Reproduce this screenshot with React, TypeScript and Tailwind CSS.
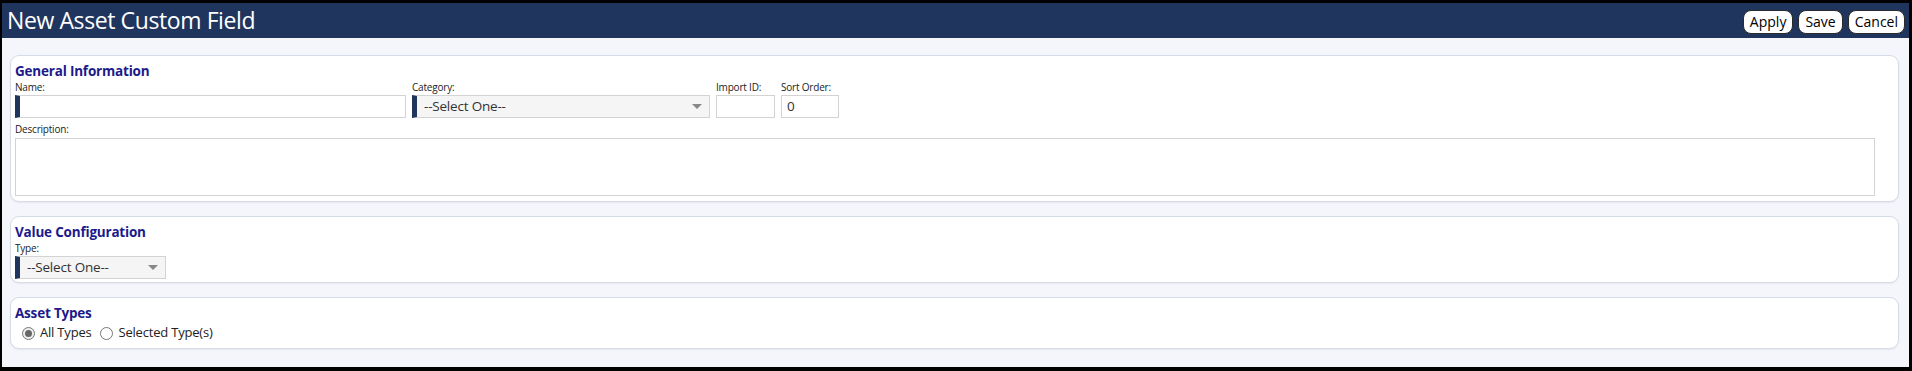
const font = { fontFamily: '"Open Sans", "Noto Sans", sans-serif' }

function Label({ children }: { children: React.ReactNode }) {
  return <div className="text-[10px] leading-[13px] text-[#222] tracking-[-0.2px]">{children}</div>
}

function SelectBox({ width }: { width: string }) {
  return (
    <div className={`flex items-center h-[23px] ${width} border border-[#d3d3d3] bg-[#f5f5f5] border-l-[5px] border-l-[#1f355e]`}>
      <span className="pl-[7px] text-[13.5px] text-[#333] flex-1 tracking-[-0.2px]">--Select One--</span>
      <svg width="10" height="6" viewBox="0 0 10 6" className="mr-[7px]">
        <path d="M0 0 L10 0 L5 5 Z" fill="#888" />
      </svg>
    </div>
  )
}

function Card({ title, children }: { title: string; children: React.ReactNode }) {
  return (
    <div className="bg-white border border-[#d6dbe8] rounded-[9px] px-[4px] pt-[6px] shadow-[0_1px_2px_rgba(0,0,0,0.06)]">
      <h2 className="text-[13.5px] font-bold leading-[18px] text-[#1c1a8a] tracking-[-0.2px]">{title}</h2>
      {children}
    </div>
  )
}

export default function App() {
  return (
    <div
      style={font}
      className="w-[1912px] h-[371px] bg-[#f4f6fc] border-black border-t-[3px] border-l-2 border-r-[3px] border-b-4 flex flex-col"
    >
      {/* header */}
      <div className="h-[35px] bg-[#1f355e] flex items-center justify-between pl-[5px] pr-[4px]">
        <h1 className="text-[23px] text-white leading-none tracking-[-0.4px]">New Asset Custom Field</h1>
        <div className="flex gap-[5px] pt-[2px]">
          {['Apply', 'Save', 'Cancel'].map(b => (
            <button
              key={b}
              className="h-[24px] px-[6px] rounded-[8px] bg-white border border-[#2a2a2a] text-[14px] text-black leading-none"
            >
              {b}
            </button>
          ))}
        </div>
      </div>

      <div className="flex flex-col gap-[14px] pl-[8px] pr-[10px] pt-[17px]">
        {/* General Information */}
        <div className="h-[147px]">
          <Card title="General Information">
            <div className="flex gap-[6px] mt-[1px]">
              <div>
                <Label>Name:</Label>
                <div className="mt-[1px] h-[23px] w-[391px] border border-[#d3d3d3] border-l-[5px] border-l-[#1f355e] bg-white" />
              </div>
              <div>
                <Label>Category:</Label>
                <div className="mt-[1px]">
                  <SelectBox width="w-[298px]" />
                </div>
              </div>
              <div>
                <Label>Import ID:</Label>
                <div className="mt-[1px] h-[23px] w-[59px] border border-[#d3d3d3] bg-white" />
              </div>
              <div>
                <Label>Sort Order:</Label>
                <div className="mt-[1px] h-[23px] w-[58px] border border-[#d3d3d3] bg-white flex items-center pl-[5px] text-[13.5px] text-[#333]">
                  0
                </div>
              </div>
            </div>
            <div className="mt-[5px]">
              <Label>Description:</Label>
              <div className="mt-[2px] mr-[19px] h-[58px] border border-[#d3d3d3] bg-white" />
            </div>
            <div className="h-[5px]" />
          </Card>
        </div>

        {/* Value Configuration */}
        <Card title="Value Configuration">
          <div className="mt-[1px]">
            <Label>Type:</Label>
            <div className="mt-[1px]">
              <SelectBox width="w-[151px]" />
            </div>
          </div>
          <div className="h-[3px]" />
        </Card>

        {/* Asset Types */}
        <Card title="Asset Types">
          <div className="flex items-center h-[22px] pl-[7px] text-[13px] text-[#222] tracking-[-0.2px]">
            <span className="w-[13px] h-[13px] rounded-full border border-[#777] bg-[#eee] flex items-center justify-center">
              <span className="w-[7px] h-[7px] rounded-full bg-[#666]" />
            </span>
            <span className="ml-[5px]">All Types</span>
            <span className="ml-[9px] w-[13px] h-[13px] rounded-full border border-[#777] bg-white" />
            <span className="ml-[5px]">Selected Type(s)</span>
          </div>
          <div className="h-[4px]" />
        </Card>
      </div>
    </div>
  )
}
